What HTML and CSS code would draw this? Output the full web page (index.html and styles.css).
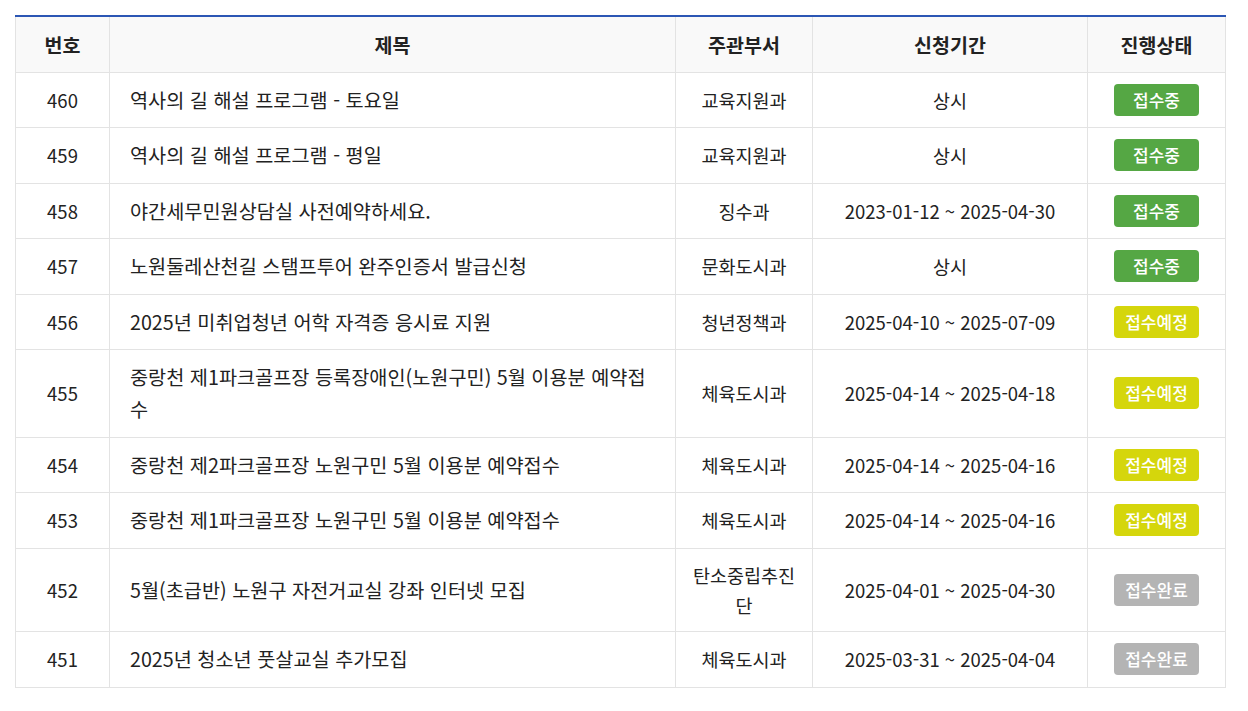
FILE: index.html
```html
<!DOCTYPE html>
<html lang="ko">

<head>
    <meta charset="UTF-8">
    <meta name="viewport" content="width=device-width, initial-scale=1.0">
    <title>신청 목록</title>
    <link rel="stylesheet" href="styles.css">
</head>

<body>
    <div class="board">
        <table class="list">
            <colgroup>
                <col class="c-num">
                <col class="c-title">
                <col class="c-dept">
                <col class="c-date">
                <col class="c-state">
            </colgroup>
            <thead>
                <tr>
                    <th>번호</th>
                    <th>제목</th>
                    <th>주관부서</th>
                    <th>신청기간</th>
                    <th>진행상태</th>
                </tr>
            </thead>
            <tbody>
                <tr>
                    <td class="num">460</td>
                    <td class="title">역사의 길 해설 프로그램 - 토요일</td>
                    <td class="dept">교육지원과</td>
                    <td class="date">상시</td>
                    <td class="state"><span class="badge ing">접수중</span></td>
                </tr>
                <tr>
                    <td class="num">459</td>
                    <td class="title">역사의 길 해설 프로그램 - 평일</td>
                    <td class="dept">교육지원과</td>
                    <td class="date">상시</td>
                    <td class="state"><span class="badge ing">접수중</span></td>
                </tr>
                <tr>
                    <td class="num">458</td>
                    <td class="title">야간세무민원상담실 사전예약하세요.</td>
                    <td class="dept">징수과</td>
                    <td class="date">2023-01-12 ~ 2025-04-30</td>
                    <td class="state"><span class="badge ing">접수중</span></td>
                </tr>
                <tr>
                    <td class="num">457</td>
                    <td class="title">노원둘레산천길 스탬프투어 완주인증서 발급신청</td>
                    <td class="dept">문화도시과</td>
                    <td class="date">상시</td>
                    <td class="state"><span class="badge ing">접수중</span></td>
                </tr>
                <tr>
                    <td class="num">456</td>
                    <td class="title">2025년 미취업청년 어학 자격증 응시료 지원</td>
                    <td class="dept">청년정책과</td>
                    <td class="date">2025-04-10 ~ 2025-07-09</td>
                    <td class="state"><span class="badge soon">접수예정</span></td>
                </tr>
                <tr>
                    <td class="num">455</td>
                    <td class="title">중랑천 제1파크골프장 등록장애인(노원구민) 5월 이용분 예약접수</td>
                    <td class="dept">체육도시과</td>
                    <td class="date">2025-04-14 ~ 2025-04-18</td>
                    <td class="state"><span class="badge soon">접수예정</span></td>
                </tr>
                <tr>
                    <td class="num">454</td>
                    <td class="title">중랑천 제2파크골프장 노원구민 5월 이용분 예약접수</td>
                    <td class="dept">체육도시과</td>
                    <td class="date">2025-04-14 ~ 2025-04-16</td>
                    <td class="state"><span class="badge soon">접수예정</span></td>
                </tr>
                <tr>
                    <td class="num">453</td>
                    <td class="title">중랑천 제1파크골프장 노원구민 5월 이용분 예약접수</td>
                    <td class="dept">체육도시과</td>
                    <td class="date">2025-04-14 ~ 2025-04-16</td>
                    <td class="state"><span class="badge soon">접수예정</span></td>
                </tr>
                <tr>
                    <td class="num">452</td>
                    <td class="title">5월(초급반) 노원구 자전거교실 강좌 인터넷 모집</td>
                    <td class="dept">탄소중립추진단</td>
                    <td class="date">2025-04-01 ~ 2025-04-30</td>
                    <td class="state"><span class="badge done">접수완료</span></td>
                </tr>
                <tr>
                    <td class="num">451</td>
                    <td class="title">2025년 청소년 풋살교실 추가모집</td>
                    <td class="dept">체육도시과</td>
                    <td class="date">2025-03-31 ~ 2025-04-04</td>
                    <td class="state"><span class="badge done">접수완료</span></td>
                </tr>
            </tbody>
        </table>
    </div>
</body>

</html>
```

FILE: styles.css
```css
* {
    margin: 0;
    padding: 0;
    box-sizing: border-box;
}

body {
    font-family: "Noto Sans CJK KR", "Noto Sans", sans-serif;
    color: #222;
    background: #fff;
}

.board {
    padding: 15px;
}

.list {
    width: 1211px;
    border-collapse: collapse;
    table-layout: fixed;
    border-top: 2px solid #2b56b4;
}

.list .c-num {
    width: 94px;
}

.list .c-title {
    width: 566px;
}

.list .c-dept {
    width: 137px;
}

.list .c-date {
    width: 275px;
}

.list .c-state {
    width: 138px;
}

.list th,
.list td {
    border: 1px solid #e3e3e3;
    text-align: center;
    vertical-align: middle;
}

.list thead th {
    border-top: 0;
    height: 56px;
    background: #f9f9f9;
    font-size: 19.5px;
    font-weight: 700;
    color: #222;
}

.list td {
    padding: 11.25px 10px;
    font-size: 18.5px;
    line-height: 30px;
}

.list td.title {
    text-align: left;
    padding-left: 20px;
    padding-right: 20px;
    font-size: 19.7px;
    line-height: 32px;
}

.list td.state {
    line-height: 0;
}

.badge {
    display: inline-block;
    width: 85px;
    height: 32px;
    line-height: 32px;
    border-radius: 4px;
    color: #fff;
    font-size: 17px;
    font-weight: 500;
}

.badge.ing {
    background: #55a744;
}

.badge.soon {
    background: #d5d60c;
}

.badge.done {
    background: #b4b4b4;
}
```
